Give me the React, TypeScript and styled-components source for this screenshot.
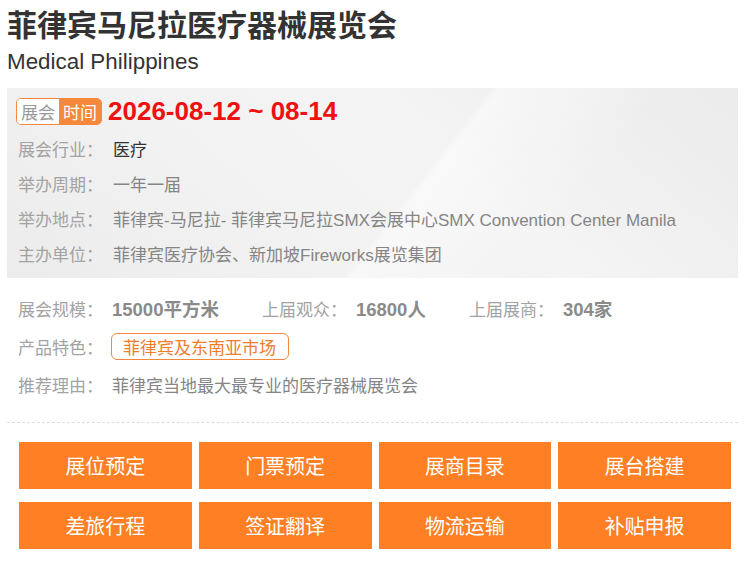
import React from "react";
import styled, { createGlobalStyle } from "styled-components";

const GlobalStyle = createGlobalStyle`
    body {
        margin: 0;
        background: #fff;
        font-family: "Liberation Sans", "Noto Sans CJK SC", Arial, sans-serif;
    }
`

const Page = styled.div`
    width: 731px;
    padding: 8px 0 0 7px;
`

const Title = styled.h1`
    margin: 0;
    font-size: 30px;
    line-height: 36px;
    font-weight: bold;
    color: #333;
`

const Subtitle = styled.div`
    font-size: 22.4px;
    line-height: 30px;
    color: #333;
    margin: 3px 0 11px 0;
`

const InfoBox = styled.div`
    padding: 10px 10px 7px 9px;
    background:
        linear-gradient(128deg, rgba(255,255,255,0) 55%, rgba(255,255,255,0.45) 56%, rgba(255,255,255,0) 75%),
        linear-gradient(40deg, #ececec 0%, #f2f2f2 35%, #f4f4f4 60%, #ebebeb 100%);
`

const DateRow = styled.div`
    display: flex;
    align-items: center;
    gap: 6px;
    height: 27px;
    margin-bottom: 6px;
`

const Badge = styled.div`
    display: flex;
    height: 27px;
    box-sizing: border-box;
    border: 1px solid #f5883a;
    border-radius: 5px;
    overflow: hidden;
`

const BadgeHalf = styled.span<{ active?: boolean }>`
    display: flex;
    align-items: center;
    padding: 0 4px;
    font-size: 17px;
    background: ${props => props.active ? "#f5883a" : "#fff"};
    color: ${props => props.active ? "#fff" : "#999"};
`

const DateText = styled.span`
    font-size: 26px;
    font-weight: bold;
    color: #ee1111;
`

const Row = styled.div<{ height?: number }>`
    display: flex;
    align-items: center;
    height: ${props => props.height || 35}px;
    font-size: 17px;
`

const Label = styled.span<{ width?: number }>`
    flex: none;
    width: ${props => props.width || 97}px;
    color: #a3a3a3;
    padding-left: 2px;
    box-sizing: border-box;
    white-space: nowrap;
`

const Value = styled.span<{ dark?: boolean }>`
    color: ${props => props.dark ? "#333" : "#858585"};
    white-space: nowrap;
`

const Section = styled.div`
    padding: 11px 0 0 9px;
`

const Stat = styled.div`
    display: flex;
    align-items: center;
    margin-right: 41px;
`

const StatValue = styled.span`
    font-size: 18.5px;
    font-weight: bold;
    color: #8a8a8a;
`

const Tag = styled.span`
    display: inline-flex;
    align-items: center;
    height: 27px;
    box-sizing: border-box;
    padding: 0 12px 0 11px;
    margin-left: -1px;
    border: 1px solid #f0883e;
    border-radius: 6px;
    color: #f07d2a;
    font-size: 17px;
`

const Divider = styled.div`
    margin-top: 18px;
    border-top: 1px dashed #dcdcdc;
`

const ButtonGrid = styled.div`
    display: grid;
    grid-template-columns: repeat(4, 1fr);
    column-gap: 7px;
    row-gap: 13px;
    padding: 19px 7px 0 12px;
`

const ActionButton = styled.div`
    height: 47px;
    display: flex;
    align-items: center;
    justify-content: center;
    background: #fe7f24;
    color: #fff;
    font-size: 20px;
    font-family: "Noto Sans CJK SC", sans-serif;
`

const infoRows = [
    { label: "展会行业：", value: "医疗", dark: true },
    { label: "举办周期：", value: "一年一届" },
    { label: "举办地点：", value: "菲律宾-马尼拉- 菲律宾马尼拉SMX会展中心SMX Convention Center Manila" },
    { label: "主办单位：", value: "菲律宾医疗协会、新加坡Fireworks展览集团" },
]

const stats = [
    { label: "展会规模：", value: "15000平方米" },
    { label: "上届观众：", value: "16800人" },
    { label: "上届展商：", value: "304家" },
]

const actions = ["展位预定", "门票预定", "展商目录", "展台搭建", "差旅行程", "签证翻译", "物流运输", "补贴申报"]

export default function App() {
    return (
        <Page>
            <GlobalStyle />
            <Title>菲律宾马尼拉医疗器械展览会</Title>
            <Subtitle>Medical Philippines</Subtitle>
            <InfoBox>
                <DateRow>
                    <Badge>
                        <BadgeHalf>展会</BadgeHalf>
                        <BadgeHalf active>时间</BadgeHalf>
                    </Badge>
                    <DateText>2026-08-12 ~ 08-14</DateText>
                </DateRow>
                {infoRows.map(r => (
                    <Row key={r.label}>
                        <Label>{r.label}</Label>
                        <Value dark={r.dark}>{r.value}</Value>
                    </Row>
                ))}
            </InfoBox>
            <Section>
                <Row height={38}>
                    {stats.map(s => (
                        <Stat key={s.label}>
                            <Label width={96}>{s.label}</Label>
                            <StatValue>{s.value}</StatValue>
                        </Stat>
                    ))}
                </Row>
                <Row height={38}>
                    <Label width={96}>产品特色：</Label>
                    <Tag>菲律宾及东南亚市场</Tag>
                </Row>
                <Row height={39}>
                    <Label width={96}>推荐理由：</Label>
                    <Value>菲律宾当地最大最专业的医疗器械展览会</Value>
                </Row>
            </Section>
            <Divider />
            <ButtonGrid>
                {actions.map(a => <ActionButton key={a}>{a}</ActionButton>)}
            </ButtonGrid>
        </Page>
    )
}
